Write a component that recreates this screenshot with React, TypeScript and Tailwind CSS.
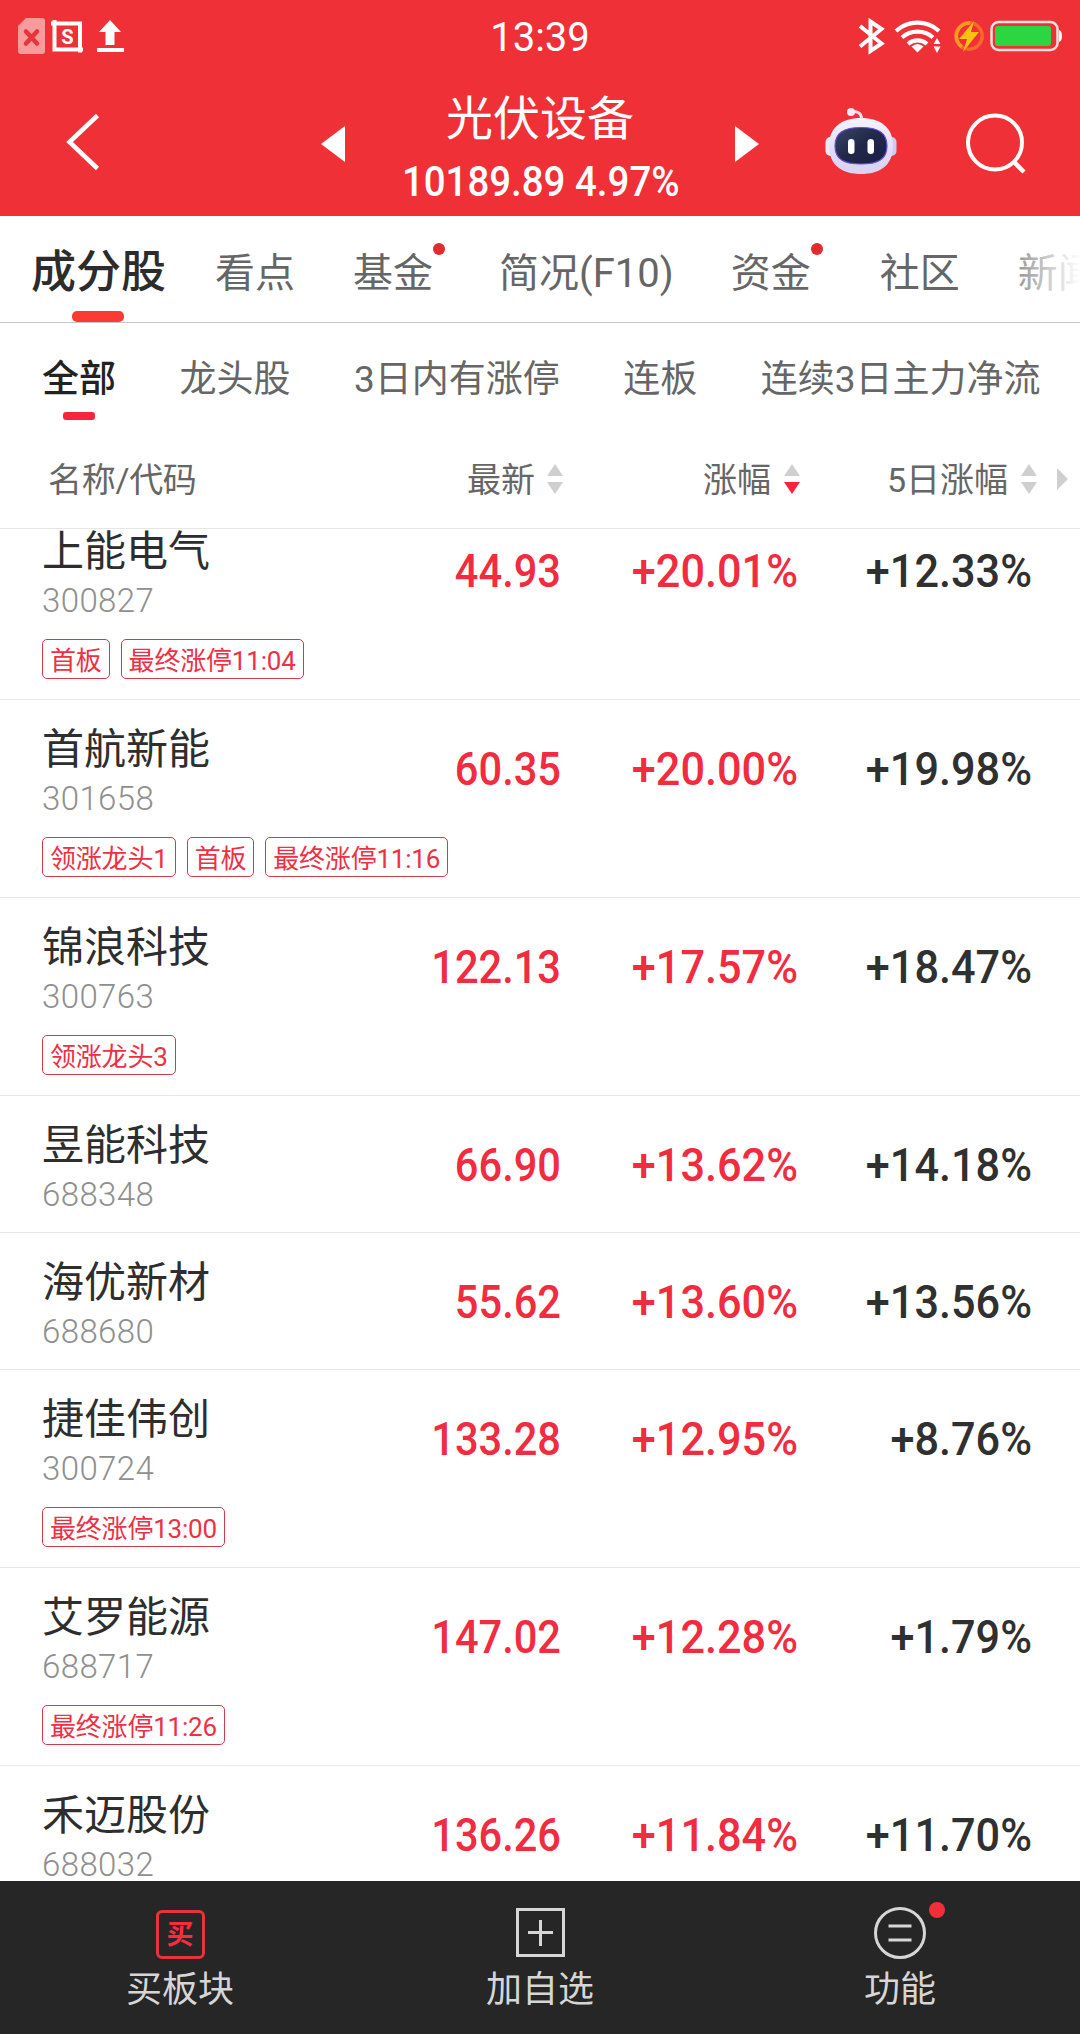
import { useState } from 'react';

type Tab = { label: string; margin: string; dot?: boolean };
type Stock = {
  name: string;
  code: string;
  price: string;
  change: string;
  change5: string;
  tags: string[];
};

const tabs: Tab[] = [
  { label: '成分股', margin: 'ml-[31px]' },
  { label: '看点', margin: 'ml-[49px]' },
  { label: '基金', margin: 'ml-[58px]', dot: true },
  { label: '简况(F10)', margin: 'ml-[66px]' },
  { label: '资金', margin: 'ml-[57px]', dot: true },
  { label: '社区', margin: 'ml-[69px]' },
  { label: '新闻', margin: 'ml-[58px]' },
];

const filters = ['全部', '龙头股', '3日内有涨停', '连板', '连续3日主力净流'];

const stocks: Stock[] = [
  { name: '上能电气', code: '300827', price: '44.93', change: '+20.01%', change5: '+12.33%', tags: ['首板', '最终涨停11:04'] },
  { name: '首航新能', code: '301658', price: '60.35', change: '+20.00%', change5: '+19.98%', tags: ['领涨龙头1', '首板', '最终涨停11:16'] },
  { name: '锦浪科技', code: '300763', price: '122.13', change: '+17.57%', change5: '+18.47%', tags: ['领涨龙头3'] },
  { name: '昱能科技', code: '688348', price: '66.90', change: '+13.62%', change5: '+14.18%', tags: [] },
  { name: '海优新材', code: '688680', price: '55.62', change: '+13.60%', change5: '+13.56%', tags: [] },
  { name: '捷佳伟创', code: '300724', price: '133.28', change: '+12.95%', change5: '+8.76%', tags: ['最终涨停13:00'] },
  { name: '艾罗能源', code: '688717', price: '147.02', change: '+12.28%', change5: '+1.79%', tags: ['最终涨停11:26'] },
  { name: '禾迈股份', code: '688032', price: '136.26', change: '+11.84%', change5: '+11.70%', tags: [] },
];

function StatusBar() {
  return (
    <div className="grid h-[72px] grid-cols-[1fr_auto_1fr] items-start px-[18px]">
      <svg className="w-[120px] h-[72px]" viewBox="18 0 120 72" fill="none">
        <path d="M26 18h16a3 3 0 0 1 3 3v30a3 3 0 0 1-3 3H21a3 3 0 0 1-3-3V26z" fill="#f99a9c" />
        <path d="M26 31.500l11 12M37 31.500l-11 12" stroke="#e8343c" strokeWidth="4.500" strokeLinecap="round" />
        <path d="M51 23.500h29v29M54.500 20v29.500h28.500" stroke="#fff" strokeWidth="4" />
        <path d="M110 20l11 12h-6.500v13h-9V32H99z" fill="#fff" />
        <path d="M97 50h27" stroke="#fff" strokeWidth="4" />
        <text x="67.500" y="43.500" textAnchor="middle" fill="#fff" fontSize="20" fontWeight="700" fontFamily="Roboto">S</text>
      </svg>
      <span className="text-[40px] leading-[72px] text-white pt-[2px]">13:39</span>
      <svg className="w-[204px] h-[72px] justify-self-end" viewBox="858 0 204 72" fill="none">
        <path d="M860 26l21.500 17.500L870.500 51V21.500L881.500 29 860 46.500" stroke="#fff" strokeWidth="4" />
        <path d="M896 31a32 32 0 0 1 43 0M902 37.500a23.500 23.500 0 0 1 31 0M908 44a14.500 14.500 0 0 1 19 0" stroke="#fff" strokeWidth="4.200" />
        <path d="M911.500 46.500q6-5 12 0l-6 6z" fill="#fff" />
        <path d="M937 38l3.500 6h-7zM937 53l3.500-6.500h-7z" fill="#fff" />
        <circle cx="969" cy="36" r="13.200" stroke="#f9672c" strokeWidth="3.500" />
        <path d="M962 47a13.200 13.200 0 0 1 8-24" stroke="#fb9a20" strokeWidth="3.500" />
        <path d="M974 21l-15 18h8l-4 13 16-20h-8z" fill="#fdc012" />
        <rect x="991.500" y="22" width="66" height="28" rx="7" stroke="#fde0e0" strokeWidth="2.500" />
        <rect x="995" y="26" width="56" height="20" rx="3" fill="#2bd640" />
        <path d="M1059 30q3 1 3 6t-3 6z" fill="#fff" />
      </svg>
    </div>
  );
}

function Robot() {
  return (
    <svg className="w-[74px] h-[72px]" viewBox="824 105 74 72" fill="none">
      <defs>
        <linearGradient id="shell" x1="0" y1="0" x2="0" y2="1">
          <stop offset="0" stopColor="#f5f3fc" />
          <stop offset="0.600" stopColor="#dfdcf8" />
          <stop offset="1" stopColor="#d9d2f2" />
        </linearGradient>
        <linearGradient id="visor" x1="0" y1="0" x2="1" y2="1">
          <stop offset="0" stopColor="#3a4468" />
          <stop offset="0.500" stopColor="#202848" />
          <stop offset="1" stopColor="#1b1f48" />
        </linearGradient>
      </defs>
      <path d="M851 111.500q10.500-1 10.500 7.500" stroke="#f0dcec" strokeWidth="3" />
      <circle cx="851" cy="112" r="4" fill="#f8e9f2" />
      <rect x="825.500" y="137" width="10" height="19" rx="5" fill="#eceafa" />
      <rect x="886.500" y="137" width="10" height="19" rx="5" fill="#cfcaf2" />
      <path d="M861 118c19 0 32 9 32 28 0 20-14 28-32 28s-32-8-32-28c0-19 13-28 32-28z" fill="url(#shell)" />
      <path
        d="M861 127.500c17 0 26 5 26 18.500 0 14-10 18-26 18s-26-4-26-18c0-13.500 9-18.500 26-18.500z"
        fill="url(#visor)"
        stroke="#6b4fd6"
        strokeWidth="1.200"
      />
      <rect x="848" y="139" width="6.500" height="15" rx="3.200" fill="#fff" />
      <rect x="867.500" y="139" width="6.500" height="15" rx="3.200" fill="#fff" />
    </svg>
  );
}

function Header() {
  return (
    <div className="h-[216px] shrink-0 bg-[#ef3036]">
      <StatusBar />
      <div className="flex h-[144px] items-start">
        <svg className="ml-[64px] mt-[40px] w-[40px] h-[60px]" viewBox="64 112 40 60" fill="none">
          <path d="M97.500 115.500L69.500 142l28 26.500" stroke="#fff" strokeWidth="4.500" />
        </svg>
        <svg className="ml-[217px] mt-[54px] w-[24px] h-[36px]" viewBox="0 0 24 36">
          <path d="M24 0v36L0 18z" fill="#fff" />
        </svg>
        <div className="w-[390px] flex flex-col items-center text-white">
          <div className="mt-[17px] text-[47px] leading-[60px]">光伏设备</div>
          <div className="mt-[8px] ml-[2px] text-[42px] leading-[50px] font-medium whitespace-nowrap scale-x-[0.915]">10189.89 4.97%</div>
        </div>
        <svg className="mt-[54px] w-[24px] h-[36px]" viewBox="0 0 24 36">
          <path d="M0 0v36l24-18z" fill="#fff" />
        </svg>
        <div className="ml-[65px] mt-[33px]">
          <Robot />
        </div>
        <svg className="ml-[66px] mt-[38px] w-[66px] h-[66px]" viewBox="964 110 66 66" fill="none">
          <circle cx="995" cy="142.500" r="27" stroke="#fff" strokeWidth="4" />
          <path d="M1013.500 161.500l10.500 10.500" stroke="#fff" strokeWidth="4.500" />
        </svg>
      </div>
    </div>
  );
}

function SortArrows({ active = false }: { active?: boolean }) {
  return (
    <svg className="w-[16px] h-[30px]" viewBox="0 0 16 30">
      <path d="M8 0l8 12H0z" fill="#cfcfcf" />
      <path d="M8 30l8-12H0z" fill={active ? '#f7253b' : '#cfcfcf'} />
    </svg>
  );
}

function StockRow({ stock }: { stock: Stock }) {
  return (
    <div className={`shrink-0 border-b border-[#e8e8e8] ${stock.tags.length ? 'h-[198px]' : 'h-[137px]'}`}>
      <div className="flex h-[122px]">
        <div className="w-[300px] pl-[42px] pt-[23px]">
          <div className="text-[42px] leading-[54px] text-[#2e2e2e]">{stock.name}</div>
          <div className="mt-[2px] text-[33px] leading-[40px] font-light tracking-[0.4px] text-[#8f8f8f]">{stock.code}</div>
        </div>
        <div className="flex h-[62px] mt-[38px] text-[47px] leading-[62px] font-medium text-[#f12c40]">
          <div className="w-[261px] text-right origin-right scale-x-[0.885]">{stock.price}</div>
          <div className="w-[237px] text-right origin-right scale-x-[0.92]">{stock.change}</div>
          <div className="w-[234px] text-right origin-right scale-x-[0.92] text-[#303030]">{stock.change5}</div>
        </div>
      </div>
      {stock.tags.length > 0 && (
        <div className="flex gap-[11px] pl-[42px] mt-[15px]">
          {stock.tags.map((tag) => (
            <span
              key={tag}
              className="h-[40px] rounded-[5px] border border-[#d03a4c] px-[7px] text-[26px] leading-[42px] tracking-[-0.2px] text-[#ee3045]"
            >
              {tag}
            </span>
          ))}
        </div>
      )}
    </div>
  );
}

function App() {
  const [tab, setTab] = useState('成分股');
  const [filter, setFilter] = useState('全部');

  return (
    <div className="flex h-[2034px] w-[1080px] flex-col overflow-hidden bg-white font-[Roboto,'Noto_Sans_CJK_SC',sans-serif]">
      <Header />

      {/* Tabs */}
      <div className="relative flex h-[107px] shrink-0 overflow-hidden border-b border-[#c6c6c6] whitespace-nowrap">
        {tabs.map((t) => (
          <button
            key={t.label}
            onClick={() => setTab(t.label)}
            className={`relative h-[106px] shrink-0 pt-[4px] leading-[102px] ${t.margin} ${
              t.label === tab ? 'pt-[6px] text-[45px] leading-[100px] font-medium text-[#2c2c2c]' : 'pt-[7px] leading-[99px] text-[40px] text-[#666666]'
            }`}
          >
            {t.label}
            {t.dot && <span className="absolute -right-[12px] top-[27px] size-[12px] rounded-full bg-[#e02c2c]" />}
            {t.label === tab && (
              <span className="absolute bottom-0 left-[41px] h-[11px] w-[52px] rounded-[5px] bg-[#fc3a34]" />
            )}
          </button>
        ))}
        <div className="absolute right-0 top-0 h-[106px] w-[84px] bg-gradient-to-r from-white/10 to-white" />
      </div>

      {/* Filters */}
      <div className="flex h-[111px] shrink-0 gap-[63.500px] pl-[42px] whitespace-nowrap">
        {filters.map((f) => (
          <button
            key={f}
            onClick={() => setFilter(f)}
            className={`relative shrink-0 text-[37px] leading-[113px] ${
              f === filter ? 'font-medium text-[#222222]' : 'text-[#666666]'
            }`}
          >
            {f}
            {f === filter && (
              <span className="absolute top-[89px] left-1/2 h-[8px] w-[32px] -translate-x-1/2 rounded-[3px] bg-[#f7253b]" />
            )}
          </button>
        ))}
      </div>

      {/* Column titles */}
      <div className="flex h-[95px] shrink-0 items-center border-b border-[#e6e6e6] pb-[5px] text-[34px] text-[#666666]">
        <span className="w-[300px] pl-[48px] pt-[4px] tracking-[-0.3px]">名称/代码</span>
        <div className="flex w-[263px] items-center justify-end gap-[12px]">
          <span className="pt-[4px]">最新</span>
          <SortArrows />
        </div>
        <div className="flex w-[237px] items-center justify-end gap-[13px]">
          <span className="pt-[4px]">涨幅</span>
          <SortArrows active />
        </div>
        <div className="flex w-[237px] items-center justify-end gap-[13px]">
          <span className="pt-[4px]">5日涨幅</span>
          <SortArrows />
        </div>
        <svg className="ml-[20px] w-[11px] h-[22px]" viewBox="0 0 11 22">
          <path d="M0 0l11 11L0 22z" fill="#cfcfcf" />
        </svg>
      </div>

      {/* Stock list, scrolled slightly under the column titles */}
      <div className="flex flex-1 flex-col overflow-hidden">
        <div className="-mt-[27px] flex flex-col">
          {stocks.map((s) => (
            <StockRow key={s.code} stock={s} />
          ))}
        </div>
      </div>

      {/* Bottom bar */}
      <div className="grid h-[153px] shrink-0 grid-cols-3 bg-[#262626] text-center text-[36px] leading-[44px] text-[#d6d6d6]">
        <div className="flex flex-col items-center">
          <div className="mt-[29px] h-[49px] w-[49px] rounded-[6px] border-[3px] border-[#e5343d] text-[27px] leading-[44px] font-bold text-[#fb2c3c]">
            买
          </div>
          <span className="mt-[9px]">买板块</span>
        </div>
        <div className="flex flex-col items-center">
          <svg className="mt-[27px] h-[49px] w-[49px]" viewBox="0 0 49 49" fill="none" stroke="#d6d6d6" strokeWidth="3">
            <path d="M1.500 1.500h46v46h-46zM12 24.500h25M24.500 12v26" />
          </svg>
          <span className="mt-[11px]">加自选</span>
        </div>
        <div className="flex flex-col items-center">
          <div className="relative mt-[26px]">
            <svg className="h-[52px] w-[52px]" viewBox="0 0 52 52" fill="none" stroke="#d6d6d6" strokeWidth="3">
              <circle cx="26" cy="26" r="24.500" />
              <path d="M14.500 19h23M14.500 33h23" />
            </svg>
            <span className="absolute -right-[19px] -top-[5px] size-[16px] rounded-full bg-[#f03038]" />
          </div>
          <span className="mt-[9px]">功能</span>
        </div>
      </div>
    </div>
  );
}

export default App;
